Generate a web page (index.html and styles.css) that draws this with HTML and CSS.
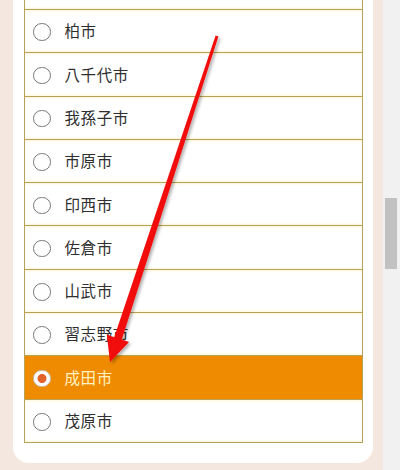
FILE: index.html
```html
<!DOCTYPE html>
<html lang="ja">
<head>
<meta charset="utf-8">
<title>市区町村の選択</title>
<link rel="stylesheet" href="styles.css">
</head>
<body>
<div class="window">
  <div class="page">
    <div class="card">
      <ul class="choices">
        <li class="peek"></li>
        <li class="choice"><span class="radio"></span><span class="label">柏市</span></li>
        <li class="choice"><span class="radio"></span><span class="label">八千代市</span></li>
        <li class="choice"><span class="radio"></span><span class="label">我孫子市</span></li>
        <li class="choice"><span class="radio"></span><span class="label">市原市</span></li>
        <li class="choice"><span class="radio"></span><span class="label">印西市</span></li>
        <li class="choice"><span class="radio"></span><span class="label">佐倉市</span></li>
        <li class="choice"><span class="radio"></span><span class="label">山武市</span></li>
        <li class="choice"><span class="radio"></span><span class="label">習志野市</span></li>
        <li class="choice selected"><span class="radio"></span><span class="label">成田市</span></li>
        <li class="choice"><span class="radio"></span><span class="label">茂原市</span></li>
      </ul>
    </div>
  </div>
  <div class="scrollbar"><div class="thumb"></div></div>
  <svg class="annotation" width="400" height="470" viewBox="0 0 400 470" aria-hidden="true">
    <defs>
      <filter id="shadow" x="-20%" y="-20%" width="140%" height="140%">
        <feDropShadow dx="2" dy="2" stdDeviation="1.5" flood-color="#000" flood-opacity="0.3"/>
      </filter>
    </defs>
    <polygon filter="url(#shadow)" fill="#f20a0a"
      points="215.6,35.5 218.4,36.5 121.8,339.6 129,342 110,362 106.8,334.6 114.2,337.2"/>
  </svg>
</div>
</body>
</html>
```

FILE: styles.css
```css
html, body {
  margin: 0;
  padding: 0;
}

body {
  width: 400px;
  height: 470px;
  overflow: hidden;
  font-family: "Noto Sans CJK JP", "Noto Sans", sans-serif;
}

.window {
  position: relative;
  display: flex;
  width: 400px;
  height: 470px;
}

.page {
  width: 383px;
  height: 470px;
  background: #f4e7df;
  padding-left: 13px;
  box-sizing: border-box;
}

.card {
  width: 360px;
  background: #ffffff;
  padding: 0 10px 20px 11px;
  box-sizing: border-box;
  border-radius: 0 0 16px 16px;
}

.choices {
  list-style: none;
  margin: 0;
  padding: 0;
  border-left: 1px solid #b9a257;
  border-right: 1px solid #b9a257;
  border-bottom: 1px solid #b9a257;
}

.peek {
  height: 9px;
  box-shadow: inset 0 -3px 3px -2px #fff6d6;
}

.choice {
  display: flex;
  align-items: center;
  height: 43.3px;
  box-sizing: border-box;
  border-top: 1px solid #b9a257;
  padding-left: 8px;
  box-shadow: inset 0 3px 3px -2px #fff6d6, inset 0 -3px 3px -2px #fff6d6;
}

.radio {
  width: 17.5px;
  height: 17.5px;
  box-sizing: border-box;
  border: 1px solid #777777;
  border-radius: 50%;
  background: #ffffff;
  margin-right: 14px;
  margin-top: 2px;
  flex: none;
}

.label {
  font-size: 15.5px;
  letter-spacing: 0.6px;
  color: #2f2f2f;
  line-height: 1;
}

.selected {
  background: #ef8b00;
  box-shadow: none;
}

.selected .radio {
  border: 1px solid #c8c8c8;
  background: radial-gradient(circle, #e3642a 0 4.2px, #ffffff 4.8px);
}

.selected .label {
  color: #fff1c2;
}

.scrollbar {
  width: 17px;
  height: 470px;
  background: #f1f1f1;
  padding-left: 2px;
  box-sizing: border-box;
}

.thumb {
  width: 12px;
  height: 71px;
  margin-top: 198px;
  background: #c1c1c1;
}

.annotation {
  position: absolute;
  left: 0;
  top: 0;
  pointer-events: none;
}
```
